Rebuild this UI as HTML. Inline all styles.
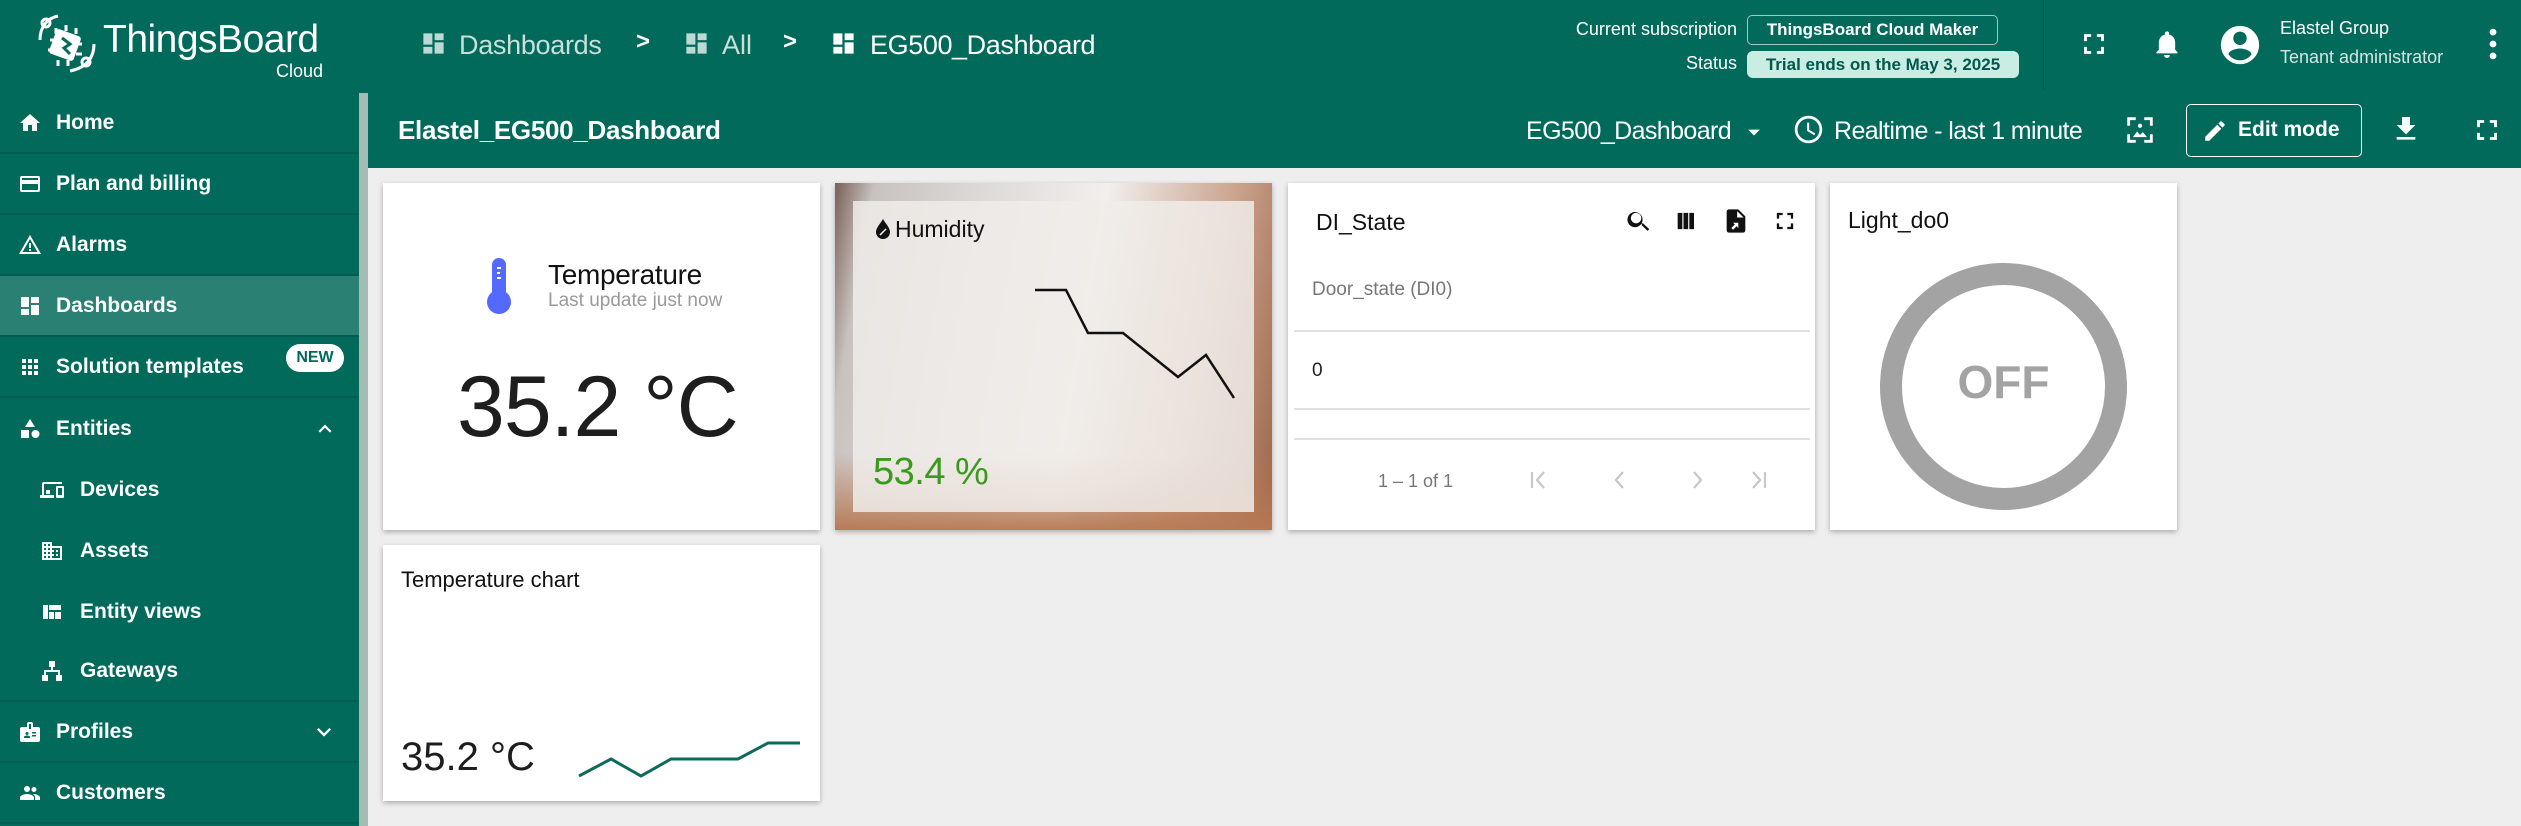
<!DOCTYPE html>
<html><head><meta charset="utf-8">
<style>
*{margin:0;padding:0;box-sizing:border-box}
body{width:2521px;height:826px;overflow:hidden;background:#eeeeee;font-family:"Liberation Sans",sans-serif;position:relative}
.a{position:absolute}
.top{left:0;top:0;width:2521px;height:93px;background:#016a5b}
.bar2{left:368px;top:93px;width:2153px;height:75px;background:#016a5b}
.side{left:0;top:93px;width:359px;height:733px;background:#016a5b}
.scroll{left:359px;top:93px;width:9px;height:733px;background:#a3bcb6}
.w{color:#fff}
.item{position:absolute;left:0;width:359px;height:61px;color:#fff;font-size:21px;font-weight:bold;border-bottom:2px solid #025c4f}
.item span{position:absolute;left:56px;top:50%;transform:translateY(-50%)}
.item svg{position:absolute;left:18px;top:50%;transform:translateY(-50%)}
.sub span{left:80px}.sub svg{left:40px}
.card{position:absolute;background:#fff;box-shadow:0 2px 5px rgba(0,0,0,.28)}
</style></head><body>
<div class="a top"></div>
<!-- logo -->
<svg class="a" style="left:36px;top:14px" width="62" height="60" viewBox="0 0 62 60" fill="none" stroke="#fff" stroke-width="3">
<path d="M4 26 C4 12 12 4 22 2"/><circle cx="10" cy="9" r="4"/>
<path d="M58 30 C58 44 50 54 34 57"/><circle cx="50" cy="48" r="4"/>
<rect x="16" y="18" width="26" height="26" rx="3" fill="#fff" stroke="none" transform="rotate(20 29 31)"/>
<path d="M20 14v6M30 11v6M40 14v6M14 26h6M12 36h6M40 30h6M40 40h6M22 46v6M32 46v6" />
<path d="M26 24l8 6-6 4 6 6" stroke="#016a5b" stroke-width="3"/>
</svg>
<div class="a w" style="left:103px;top:18px;font-size:39px;letter-spacing:-0.5px">ThingsBoard</div>
<div class="a w" style="left:276px;top:61px;font-size:18px">Cloud</div>
<!-- breadcrumbs -->
<svg class="a" style="left:420px;top:30px" width="27" height="27" viewBox="0 0 24 24" fill="#bcd9d3"><path d="M3 13h8V3H3v10zm0 8h8v-6H3v6zm10 0h8V11h-8v10zm0-18v6h8V3h-8z"/></svg>
<div class="a" style="left:459px;top:30px;font-size:27px;color:#c9dfda;letter-spacing:-0.3px">Dashboards</div>
<div class="a w" style="left:636px;top:28px;font-size:24px;font-weight:bold">&gt;</div>
<svg class="a" style="left:683px;top:30px" width="27" height="27" viewBox="0 0 24 24" fill="#bcd9d3"><path d="M3 13h8V3H3v10zm0 8h8v-6H3v6zm10 0h8V11h-8v10zm0-18v6h8V3h-8z"/></svg>
<div class="a" style="left:722px;top:30px;font-size:27px;color:#c9dfda">All</div>
<div class="a w" style="left:783px;top:28px;font-size:24px;font-weight:bold">&gt;</div>
<svg class="a" style="left:830px;top:30px" width="27" height="27" viewBox="0 0 24 24" fill="#fff"><path d="M3 13h8V3H3v10zm0 8h8v-6H3v6zm10 0h8V11h-8v10zm0-18v6h8V3h-8z"/></svg>
<div class="a w" style="left:870px;top:30px;font-size:27px;letter-spacing:-0.4px">EG500_Dashboard</div>
<!-- subscription -->
<div class="a w" style="left:1567px;top:19px;font-size:18px;width:170px;text-align:right">Current subscription</div>
<div class="a w" style="left:1747px;top:15px;width:251px;height:30px;border:1px solid #9cc9c0;border-radius:5px;font-size:17px;font-weight:bold;text-align:center;line-height:28px">ThingsBoard Cloud Maker</div>
<div class="a w" style="left:1650px;top:53px;font-size:18px;width:87px;text-align:right">Status</div>
<div class="a" style="left:1747px;top:51px;width:272px;height:27px;background:#c9ece3;border-radius:6px;font-size:17px;font-weight:bold;text-align:center;line-height:27px;color:#01584b">Trial ends on the May 3, 2025</div>
<div class="a" style="left:2043px;top:0;width:1px;height:90px;background:#015a4d"></div>
<svg class="a" style="left:2077px;top:27px" width="34" height="34" viewBox="0 0 24 24" fill="#fff"><path d="M5 5h5v2H7v3H5zM14 5h5v5h-2V7h-3zM17 14h2v5h-5v-2h3zM5 14h2v3h3v2H5z"/></svg>
<svg class="a" style="left:2153px;top:28px" width="28" height="32" viewBox="0 0 24 26" fill="#fff"><path d="M12 25a2.5 2.5 0 0 0 2.5-2.5h-5A2.5 2.5 0 0 0 12 25zm7-7v-6c0-3.5-2-6.3-5.2-7V4a1.8 1.8 0 0 0-3.6 0v1C7 5.7 5 8.5 5 12v6l-2 2v1h18v-1z"/></svg>
<svg class="a" style="left:2217px;top:22px" width="46" height="46" viewBox="0 0 24 24" fill="#fff"><path d="M12 2a10 10 0 1 0 0 20 10 10 0 0 0 0-20zm0 3a3.5 3.5 0 1 1 0 7 3.5 3.5 0 0 1 0-7zm0 15a7.5 7.5 0 0 1-6-3.1c0-2 4-3.1 6-3.1s6 1.1 6 3.1A7.5 7.5 0 0 1 12 20z"/></svg>
<div class="a w" style="left:2280px;top:18px;font-size:18px">Elastel Group</div>
<div class="a" style="left:2280px;top:47px;font-size:18px;color:#d3e6e2">Tenant administrator</div>
<svg class="a" style="left:2484px;top:27px" width="18" height="34" viewBox="0 0 6 20" fill="#fff"><circle cx="3" cy="3" r="2"/><circle cx="3" cy="10" r="2"/><circle cx="3" cy="17" r="2"/></svg>

<!-- sidebar -->
<div class="a side"></div>
<div class="a scroll"></div>
<div class="item" style="top:93px"><svg width="24" height="24" viewBox="0 0 24 24" fill="#fff"><path d="M10 20v-6h4v6h5v-8h3L12 3 2 12h3v8z"/></svg><span>Home</span></div>
<div class="item" style="top:154px"><svg width="24" height="24" viewBox="0 0 24 24" fill="#fff"><path d="M20 4H4a2 2 0 0 0-2 2v12a2 2 0 0 0 2 2h16a2 2 0 0 0 2-2V6a2 2 0 0 0-2-2zm0 14H4v-6h16zm0-10H4V6h16z"/></svg><span>Plan and billing</span></div>
<div class="item" style="top:215px"><svg width="24" height="24" viewBox="0 0 24 24" fill="#fff"><path d="M12 2L1 21h22zm0 4l7.5 13h-15zM11 10h2v5h-2zm0 6h2v2h-2z"/></svg><span>Alarms</span></div>
<div class="item" style="top:276px;background:#2a8072"><svg width="24" height="24" viewBox="0 0 24 24" fill="#fff"><path d="M3 13h8V3H3v10zm0 8h8v-6H3v6zm10 0h8V11h-8v10zm0-18v6h8V3h-8z"/></svg><span>Dashboards</span></div>
<div class="item" style="top:337px"><svg width="24" height="24" viewBox="0 0 24 24" fill="#fff"><path d="M4 4h4v4H4zm6 0h4v4h-4zm6 0h4v4h-4zM4 10h4v4H4zm6 0h4v4h-4zm6 0h4v4h-4zM4 16h4v4H4zm6 0h4v4h-4zm6 0h4v4h-4z"/></svg><span>Solution templates</span>
<div class="a" style="left:286px;top:7px;width:58px;height:28px;background:#fff;border-radius:14px;color:#016a5b;font-size:16px;text-align:center;line-height:28px">NEW</div></div>
<div class="item" style="top:398px;border:none"><svg width="24" height="24" viewBox="0 0 24 24" fill="#fff"><path d="M12 2l5 8H7zM3 13h8v8H3zM17.5 13a4 4 0 1 1 0 8 4 4 0 0 1 0-8z"/></svg><span>Entities</span><svg style="left:312px" width="26" height="26" viewBox="0 0 24 24" fill="#fff"><path d="M7.4 15.4L12 10.8l4.6 4.6L18 14l-6-6-6 6z"/></svg></div>
<div class="item sub" style="top:459px;border:none"><svg width="24" height="24" viewBox="0 0 24 24" fill="#fff"><path d="M4 6h18V4H4a2 2 0 0 0-2 2v11H0v3h14v-3H4zm19 2h-6a1 1 0 0 0-1 1v10a1 1 0 0 0 1 1h6a1 1 0 0 0 1-1V9a1 1 0 0 0-1-1zm-1 9h-4v-7h4zM6 12h4v4H6z"/></svg><span>Devices</span></div>
<div class="item sub" style="top:520px;border:none"><svg width="24" height="24" viewBox="0 0 24 24" fill="#fff"><path d="M12 7V3H2v18h20V7zM6 19H4v-2h2zm0-4H4v-2h2zm0-4H4V9h2zm0-4H4V5h2zm4 12H8v-2h2zm0-4H8v-2h2zm0-4H8V9h2zm0-4H8V5h2zm10 12h-8v-2h2v-2h-2v-2h2v-2h-2V9h8zm-2-8h-2v2h2zm0 4h-2v2h2z"/></svg><span>Assets</span></div>
<div class="item sub" style="top:581px;border:none"><svg width="24" height="24" viewBox="0 0 24 24" fill="#fff"><path d="M3 5v14h5V5zm6 0v5h12V5zm0 7v7h5v-7zm6 0v7h6v-7z"/></svg><span>Entity views</span></div>
<div class="item sub" style="top:641px"><svg width="24" height="24" viewBox="0 0 24 24" fill="#fff"><path d="M9 2h6v6h-2v3h7v5h2v6h-6v-6h2v-3H6v3h2v6H2v-6h2v-5h7V8H9z"/></svg><span>Gateways</span></div>
<div class="item" style="top:702px"><svg width="24" height="24" viewBox="0 0 24 24" fill="#fff"><path d="M20 7h-5V4a2 2 0 0 0-2-2h-2a2 2 0 0 0-2 2v3H4a2 2 0 0 0-2 2v11a2 2 0 0 0 2 2h16a2 2 0 0 0 2-2V9a2 2 0 0 0-2-2zM9 12a1.5 1.5 0 1 1 0 3 1.5 1.5 0 0 1 0-3zm3 6H6v-1c0-1 2-1.5 3-1.5s3 .5 3 1.5zm1-9h-2V4h2zm5 7.5h-4V15h4zm0-3h-4V12h4z"/></svg><span>Profiles</span><svg style="left:310px" width="28" height="28" viewBox="0 0 24 24" fill="#fff"><path d="M7.4 8.6L12 13.2l4.6-4.6L18 10l-6 6-6-6z"/></svg></div>
<div class="item" style="top:763px"><svg width="24" height="24" viewBox="0 0 24 24" fill="#fff"><path d="M9 11a3 3 0 1 0 0-6 3 3 0 0 0 0 6zm7 0a2.5 2.5 0 1 0 0-5 2.5 2.5 0 0 0 0 5zM9 13c-2.3 0-7 1.2-7 3.5V19h14v-2.5C16 14.2 11.3 13 9 13zm7 0c-.3 0-.6 0-1 .1 1.2.8 2 2 2 3.4V19h5v-2.5c0-2.3-4.7-3.5-6-3.5z"/></svg><span>Customers</span></div>

<!-- second bar -->
<div class="a bar2"></div>
<div class="a w" style="left:398px;top:115px;font-size:26px;font-weight:bold;letter-spacing:-0.3px">Elastel_EG500_Dashboard</div>
<div class="a w" style="left:1526px;top:117px;font-size:25px;letter-spacing:-0.6px">EG500_Dashboard</div>
<svg class="a" style="left:1740px;top:118px" width="28" height="28" viewBox="0 0 24 24" fill="#fff"><path d="M7 10l5 5 5-5z"/></svg>
<svg class="a" style="left:1792px;top:113px" width="33" height="33" viewBox="0 0 24 24" fill="#fff"><path d="M12 2a10 10 0 1 0 0 20 10 10 0 0 0 0-20zm0 18a8 8 0 1 1 0-16 8 8 0 0 1 0 16zm.5-13H11v6l5.2 3.2.8-1.3-4.5-2.7z"/></svg>
<div class="a w" style="left:1834px;top:117px;font-size:25px;letter-spacing:-0.6px">Realtime - last 1 minute</div>
<svg class="a" style="left:2123px;top:113px" width="34" height="34" viewBox="0 0 24 24" fill="#fff"><path d="M3 3h6v2H5v4H3zm12 0h6v6h-2V5h-4zM3 15h2v4h4v2H3zm16 0h2v6h-6v-2h4zM12 7.5a1.5 1.5 0 1 1 0 3 1.5 1.5 0 0 1 0-3zM7 17l3-4 2 2.5 2-2 3 3.5z"/></svg>
<div class="a w" style="left:2186px;top:104px;width:176px;height:53px;border:1.5px solid #fff;border-radius:5px"></div>
<svg class="a" style="left:2202px;top:118px" width="26" height="26" viewBox="0 0 24 24" fill="#fff"><path d="M3 17.25V21h3.75L17.8 9.94l-3.75-3.75zM20.7 7.04a1 1 0 0 0 0-1.41l-2.34-2.34a1 1 0 0 0-1.41 0l-1.83 1.83 3.75 3.75z"/></svg>
<div class="a w" style="left:2238px;top:118px;font-size:21px;font-weight:bold">Edit mode</div>
<svg class="a" style="left:2390px;top:113px" width="32" height="32" viewBox="0 0 24 24" fill="#fff"><path d="M19 9h-4V3H9v6H5l7 7zM5 18v2h14v-2z"/></svg>
<svg class="a" style="left:2470px;top:113px" width="34" height="34" viewBox="0 0 24 24" fill="#fff"><path d="M5 5h5v2H7v3H5zM14 5h5v5h-2V7h-3zM17 14h2v5h-5v-2h3zM5 14h2v3h3v2H5z"/></svg>

<!-- Temperature card -->
<div class="card" style="left:383px;top:183px;width:437px;height:347px">
<svg class="a" style="left:101px;top:73px" width="30" height="60" viewBox="0 0 30 60"><rect x="8" y="2" width="14" height="40" rx="7" fill="#5469ff"/><circle cx="15" cy="46" r="12" fill="#5469ff"/><path d="M13 12h4M13 17h3M13 22h4" stroke="#fff" stroke-width="2"/></svg>
<div class="a" style="left:165px;top:76px;font-size:28px;color:#111;letter-spacing:-0.3px">Temperature</div>
<div class="a" style="left:165px;top:107px;font-size:19px;color:#9a9a9a">Last update just now</div>
<div class="a" style="left:74px;top:175px;font-size:86px;color:#1e1e1e;white-space:nowrap;letter-spacing:-1px">35.2 °C</div>
</div>
<!-- Humidity card -->
<div class="card" style="left:835px;top:183px;width:437px;height:347px;overflow:hidden;background:linear-gradient(100deg,#7a6058 0%,#c8c2bf 8%,#dcdad9 30%,#f2efed 55%,#c9a08a 82%,#9b6448 100%)">
<div class="a" style="left:0;top:270px;width:437px;height:80px;background:linear-gradient(180deg,rgba(0,0,0,0),#b77954)"></div>
<div class="a" style="left:18px;top:18px;width:401px;height:311px;background:rgba(240,236,233,.85)"></div>
<svg class="a" style="left:40px;top:35px" width="16" height="22" viewBox="0 0 16 22"><path d="M8 1C5 6 1 10 1 14a7 7 0 0 0 14 0c0-4-4-8-7-13z" fill="#111"/><path d="M5 17l6-6" stroke="#fff" stroke-width="1.5"/></svg>
<div class="a" style="left:60px;top:33px;font-size:23px;color:#111">Humidity</div>
<svg class="a" style="left:0;top:0" width="437" height="347"><polyline points="200,107 231,107 253,150 288,150 343,194 371,172 399,215" fill="none" stroke="#111" stroke-width="2.5"/></svg>
<div class="a" style="left:38px;top:268px;font-size:38px;color:#3a9a1c;letter-spacing:-0.5px">53.4 %</div>
</div>
<!-- DI_State -->
<div class="card" style="left:1288px;top:183px;width:527px;height:347px">
<div class="a" style="left:28px;top:26px;font-size:23px;color:#111">DI_State</div>
<svg class="a" style="left:337px;top:24px" width="28" height="28" viewBox="0 0 24 24" fill="#111"><path d="M15.5 14h-.8l-.3-.3A6.5 6.5 0 1 0 14 14.4l.3.3v.8l5 5 1.5-1.5zm-6 0a4.5 4.5 0 1 1 0-9 4.5 4.5 0 0 1 0 9z"/></svg>
<svg class="a" style="left:385px;top:24px" width="28" height="28" viewBox="0 0 24 24" fill="#111"><path d="M4 5h4v14H4zm5 0h4v14H9zm5 0h4v14h-4z"/></svg>
<svg class="a" style="left:434px;top:22px" width="28" height="32" viewBox="0 0 24 24" fill="#111"><path d="M14 2H6a2 2 0 0 0-2 2v16a2 2 0 0 0 2 2h12a2 2 0 0 0 2-2V8zm-1 7V3.5L18.5 9zM8 18l3-3-1.5-1.5H14V18l-1.5-1.5-3 3z" /></svg>
<svg class="a" style="left:483px;top:24px" width="28" height="28" viewBox="0 0 24 24" fill="#111"><path d="M5 5h5v2H7v3H5zM14 5h5v5h-2V7h-3zM17 14h2v5h-5v-2h3zM5 14h2v3h3v2H5z"/></svg>
<div class="a" style="left:24px;top:96px;font-size:19px;color:#777">Door_state (DI0)</div>
<div class="a" style="left:6px;top:147px;width:516px;height:1.5px;background:#e0e0e0"></div>
<div class="a" style="left:24px;top:177px;font-size:19px;color:#222">0</div>
<div class="a" style="left:6px;top:225px;width:516px;height:1.5px;background:#e0e0e0"></div>
<div class="a" style="left:6px;top:255px;width:516px;height:1.5px;background:#e0e0e0"></div>
<div class="a" style="left:90px;top:288px;font-size:18px;color:#777">1 – 1 of 1</div>
<svg class="a" style="left:236px;top:283px" width="250" height="28" viewBox="0 0 250 28" fill="none" stroke="#c8c8c8" stroke-width="2.2"><path d="M8 6v16M20 6l-7 8 7 8M99 6l-7 8 7 8M170 6l7 8-7 8M241 6v16M229 6l7 8-7 8"/></svg>
</div>
<!-- Light -->
<div class="card" style="left:1830px;top:183px;width:347px;height:347px">
<div class="a" style="left:18px;top:24px;font-size:23px;color:#111">Light_do0</div>
<div class="a" style="left:50px;top:80px;width:247px;height:247px;border:22px solid #a3a3a3;border-radius:50%"></div>
<div class="a" style="left:50px;top:172px;width:247px;text-align:center;font-size:46px;color:#a3a3a3;font-weight:bold">OFF</div>
</div>
<!-- Temperature chart -->
<div class="card" style="left:383px;top:545px;width:437px;height:256px">
<div class="a" style="left:18px;top:22px;font-size:22px;color:#111">Temperature chart</div>
<div class="a" style="left:18px;top:190px;font-size:40px;color:#1e1e1e">35.2 °C</div>
<svg class="a" style="left:0;top:0" width="437" height="256"><polyline points="196,231 228,214 258,231 288,214 355,214 385,198 417,198" fill="none" stroke="#0e6b5c" stroke-width="3"/></svg>
</div>
</body></html>
